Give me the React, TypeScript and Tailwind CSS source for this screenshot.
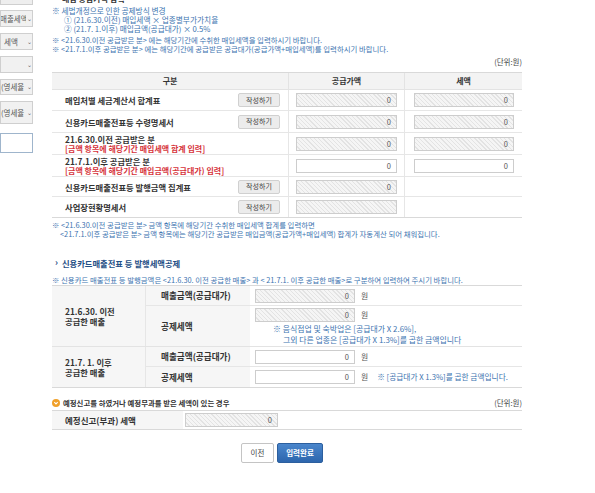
import React from "react";

const hatch =
  "bg-[repeating-linear-gradient(45deg,#f5f5f5_0px,#f5f5f5_2px,#e3e3e3_2px,#e3e3e3_3px)]";

function Amount({
  value = "0",
  plain = false,
  className = "",
}: {
  value?: string;
  plain?: boolean;
  className?: string;
}) {
  return (
    <div
      className={
        "h-[14px] border border-[#cdcdcd] flex items-center justify-end pr-[5px] text-[7.5px] text-[#555] " +
        (plain ? "bg-white " : hatch + " ") +
        className
      }
    >
      {value}
    </div>
  );
}

function WriteButton() {
  return (
    <button
      type="button"
      className="w-[42px] h-[14px] rounded-[2px] border border-[#d0d0d0] bg-[#ececec] text-[7px] text-[#444] flex items-center justify-center"
    >
      작성하기
    </button>
  );
}

function SideSelect({
  text,
  shift,
  height,
  mt,
}: {
  text: string;
  shift: string;
  height: string;
  mt: string;
}) {
  return (
    <div
      className={
        "w-[33px] border border-[#cfcfcf] bg-[#f1f1f1] flex items-center overflow-hidden " +
        height +
        " " +
        mt
      }
    >
      <div className="w-[25px] shrink-0 overflow-hidden h-full flex items-center">
        <span className={"shrink-0 whitespace-nowrap text-[7.5px] text-[#555] " + shift}>
          {text}
        </span>
      </div>
      <span className="ml-[1px] text-[6px] text-[#666] leading-none">⌄</span>
    </div>
  );
}

function Sidebar() {
  return (
    <div className="w-[33px] shrink-0 flex flex-col">
      <div className="h-[5px] w-[33px] border border-t-0 border-[#cfcfcf] bg-[#eeeeee]" />
      <SideSelect text="매출세액" shift="-ml-[1px]" height="h-[17px]" mt="mt-[5px]" />
      <SideSelect text="세액" shift="ml-[3px]" height="h-[17px]" mt="mt-[6px]" />
      <SideSelect text="" shift="" height="h-[17px]" mt="mt-[6px]" />
      <SideSelect text="(영세율" shift="ml-[0px]" height="h-[16px]" mt="mt-[6px]" />
      <SideSelect text="(영세율" shift="ml-[0px]" height="h-[23px]" mt="mt-[6px]" />
      <div className="mt-[9px] h-[20px] w-[33px] border border-[#9fb5cc] bg-white" />
    </div>
  );
}

function Note({ children, className = "" }: { children: React.ReactNode; className?: string }) {
  return (
    <div className={"h-[9px] leading-[9px] text-[7.4px] text-[#3d74b0] whitespace-nowrap " + className}>
      {children}
    </div>
  );
}

function PurchaseTable() {
  const rows = [
    { h: "h-[21px]", label: ["매입처별 세금계산서 합계표"], btn: true, a: "0", b: "0", plain: false },
    { h: "h-[22px]", label: ["신용카드매출전표등 수령명세서"], btn: true, a: "0", b: "0", plain: false },
    {
      h: "h-[22px]",
      label: ["21.6.30.이전 공급받은 분", "[금액 항목에 해당기간 매입세액 합계 입력]"],
      btn: false,
      a: "0",
      b: "0",
      plain: false,
    },
    {
      h: "h-[22px]",
      label: ["21.7.1.이후 공급받은 분", "[금액 항목에 해당기간 매입금액(공급대가) 입력]"],
      btn: false,
      a: "0",
      b: "0",
      plain: true,
    },
    { h: "h-[20px]", label: ["신용카드매출전표등 발행금액 집계표"], btn: true, a: "0", b: null, plain: false },
    { h: "h-[20px]", label: ["사업장현황명세서"], btn: true, a: "", b: null, plain: false },
  ];
  return (
    <div className="mt-[6px] border-t border-b border-[#d9d9d9]">
      <div className="h-[17px] grid grid-cols-[236px_116px_118px] bg-[#f3f3f3] text-[8px] font-bold text-[#333] border-b border-[#e3e3e3]">
        <div className="flex items-center justify-center">구분</div>
        <div className="flex items-center justify-center border-l border-[#e3e3e3]">공급가액</div>
        <div className="flex items-center justify-center border-l border-[#e3e3e3]">세액</div>
      </div>
      {rows.map((r, i) => (
        <div
          key={i}
          className={
            "grid grid-cols-[236px_116px_118px] " +
            r.h +
            (i < rows.length - 1 ? " border-b border-[#e6e6e6]" : "")
          }
        >
          <div className="flex items-center justify-between pl-[13px] pr-[8px]">
            <div className="font-bold leading-[10px] whitespace-nowrap">
              <div className="text-[8.3px] text-[#333]">{r.label[0]}</div>
              {r.label[1] && <div className="text-[8px] text-[#d6333b]">{r.label[1]}</div>}
            </div>
            {r.btn && <WriteButton />}
          </div>
          <div className="flex items-center px-[7px] border-l border-[#e6e6e6]">
            <Amount value={r.a} plain={r.plain} className="w-full" />
          </div>
          <div className="flex items-center pl-[9px] pr-[8px] border-l border-[#e6e6e6]">
            {r.b !== null && <Amount value={r.b} plain={r.plain} className="w-full" />}
          </div>
        </div>
      ))}
    </div>
  );
}

function Won() {
  return <span className="ml-[6px] text-[7.8px] text-[#555]">원</span>;
}

function SubLabel({ children }: { children: React.ReactNode }) {
  return (
    <div className="w-[105px] shrink-0 flex items-center pl-[15px] text-[8.6px] font-bold whitespace-nowrap border-l border-[#e6e6e6] bg-[#f6f6f6]">
      {children}
    </div>
  );
}

function GroupLabel({ lines }: { lines: string[] }) {
  return (
    <div className="w-[93px] shrink-0 flex flex-col justify-center pl-[13px] text-[8.3px] font-bold leading-[10.5px] bg-[#f6f6f6]">
      {lines.map((l) => (
        <div key={l}>{l}</div>
      ))}
    </div>
  );
}

function CardTable() {
  return (
    <div className="border-t border-b border-[#d9d9d9] text-[#333]">
      <div className="flex border-b border-[#e3e3e3]">
        <GroupLabel lines={["21.6.30. 이전", "공급한 매출"]} />
        <div className="flex-1 flex flex-col">
          <div className="h-[20px] flex border-b border-[#e6e6e6]">
            <SubLabel>매출금액(공급대가)</SubLabel>
            <div className="flex items-center pl-[5px]">
              <Amount className="w-[100px]" />
              <Won />
            </div>
          </div>
          <div className="h-[40px] flex">
            <SubLabel>공제세액</SubLabel>
            <div className="flex flex-col pl-[5px] pt-[2px]">
              <div className="flex items-center">
                <Amount className="w-[100px]" />
                <Won />
              </div>
              <div className="mt-[1px] pl-[18px] text-[7.9px] leading-[11px] text-[#3d74b0] whitespace-nowrap">
                <div>※ 음식점업 및 숙박업은 [공급대가 X 2.6%],</div>
                <div className="pl-[10px]">그외 다른 업종은 [공급대가 X 1.3%]를 곱한 금액입니다</div>
              </div>
            </div>
          </div>
        </div>
      </div>
      <div className="flex">
        <GroupLabel lines={["21.7. 1. 이후", "공급한 매출"]} />
        <div className="flex-1 flex flex-col">
          <div className="h-[20px] flex border-b border-[#e6e6e6]">
            <SubLabel>매출금액(공급대가)</SubLabel>
            <div className="flex items-center pl-[5px]">
              <Amount plain className="w-[100px]" />
              <Won />
            </div>
          </div>
          <div className="h-[20px] flex">
            <SubLabel>공제세액</SubLabel>
            <div className="flex items-center pl-[5px]">
              <Amount plain className="w-[100px]" />
              <Won />
              <span className="ml-[9px] text-[7.7px] text-[#3d74b0] whitespace-nowrap">
                ※ [공급대가 X 1.3%]를 곱한 금액입니다.
              </span>
            </div>
          </div>
        </div>
      </div>
    </div>
  );
}

export default function App() {
  return (
    <div className="w-[595px] h-[493px] overflow-hidden bg-white flex font-['Noto_Sans_CJK_KR','Malgun_Gothic',sans-serif]">
      <Sidebar />
      <div className="ml-[19px] w-[470px] flex flex-col">
        <div className="h-[3px] overflow-hidden">
          <div className="-mt-[6px] pl-[10px] text-[8px] leading-[9px] font-bold text-[#333]">
            매입 공급가액 입력
          </div>
        </div>

        <div className="mt-[3px]">
          <Note className="text-[7.7px]">※ 세법개정으로 인한 공제방식 변경</Note>
          <Note className="pl-[12px] text-[7.7px]">① (21.6.30.이전) 매입세액 × 업종별부가가치율</Note>
          <Note className="pl-[12px] text-[7.7px]">② (21.7. 1.이후) 매입금액(공급대가) × 0.5%</Note>
        </div>
        <div className="mt-[2px]">
          <Note>※ &lt;21.6.30.이전 공급받은 분&gt; 에는 해당기간에 수취한 매입세액을 입력하시기 바랍니다.</Note>
          <Note>※ &lt;21.7.1.이후 공급받은 분&gt; 에는 해당기간에 공급받은 공급대가(공급가액+매입세액)를 입력하시기 바랍니다.</Note>
        </div>

        <div className="mt-[4px] h-[9px] leading-[9px] text-right text-[7.5px] text-[#444]">(단위:원)</div>

        <PurchaseTable />

        <div className="mt-[2px]">
          <Note>※ &lt;21.6.30.이전 공급받은 분&gt; 금액 항목에 해당기간 수취한 매입세액 합계를 입력하면</Note>
          <Note className="pl-[8px]">
            &lt;21.7.1.이후 공급받은 분&gt; 금액 항목에는 해당기간 공급받은 매입금액(공급가액+매입세액) 합계가 자동계산 되어 채워집니다.
          </Note>
        </div>

        <div className="mt-[20px] h-[10px] leading-[10px] pl-[3px] flex items-center gap-[4px] font-bold text-[#1f4f86]">
          <span className="text-[9px]">›</span>
          <span className="text-[8.3px]">신용카드매출전표 등 발행세액공제</span>
        </div>

        <div className="mt-[7px]">
          <Note>
            ※ 신용카드 매출전표 등 발행금액은 &lt;21.6.30. 이전 공급한 매출&gt; 과 &lt; 21.7.1. 이후 공급한 매출&gt;로 구분하여 입력하여 주시기 바랍니다.
          </Note>
        </div>

        <div className="mt-[1px]">
          <CardTable />
        </div>

        <div className="mt-[10px] h-[10px] flex items-center justify-between">
          <div className="flex items-center gap-[3px]">
            <svg width="8" height="8" viewBox="0 0 8 8">
              <circle cx="4" cy="4" r="4" fill="#f0a02a" />
              <path d="M2.3 3.2 L4 4.9 L5.7 3.2" stroke="#fff" strokeWidth="1.1" fill="none" />
            </svg>
            <span className="text-[7.4px] font-bold text-[#333]">
              예정신고를 하였거나 예정부과를 받은 세액이 있는 경우
            </span>
          </div>
          <span className="text-[7.5px] text-[#444]">(단위:원)</span>
        </div>

        <div className="mt-[2px] h-[20px] flex border-t border-b border-[#d9d9d9]">
          <div className="w-[131px] shrink-0 bg-[#f6f6f6] flex items-center pl-[13px] text-[8.5px] font-bold text-[#333]">
            예정신고(부과) 세액
          </div>
          <div className="flex items-center pl-[2px]">
            <Amount className="w-[93px]" />
          </div>
        </div>

        <div className="mt-[13px] flex justify-center gap-[3px] pr-[10px]">
          <button
            type="button"
            className="w-[33px] h-[20px] rounded-[2px] border border-[#c4c4c4] bg-white text-[7.5px] text-[#444]"
          >
            이전
          </button>
          <button
            type="button"
            className="w-[46px] h-[20px] rounded-[2px] border border-[#2c5f9e] bg-[linear-gradient(#4a86cc,#2d66ad)] text-[7.5px] font-bold text-white"
          >
            입력완료
          </button>
        </div>
      </div>
    </div>
  );
}
